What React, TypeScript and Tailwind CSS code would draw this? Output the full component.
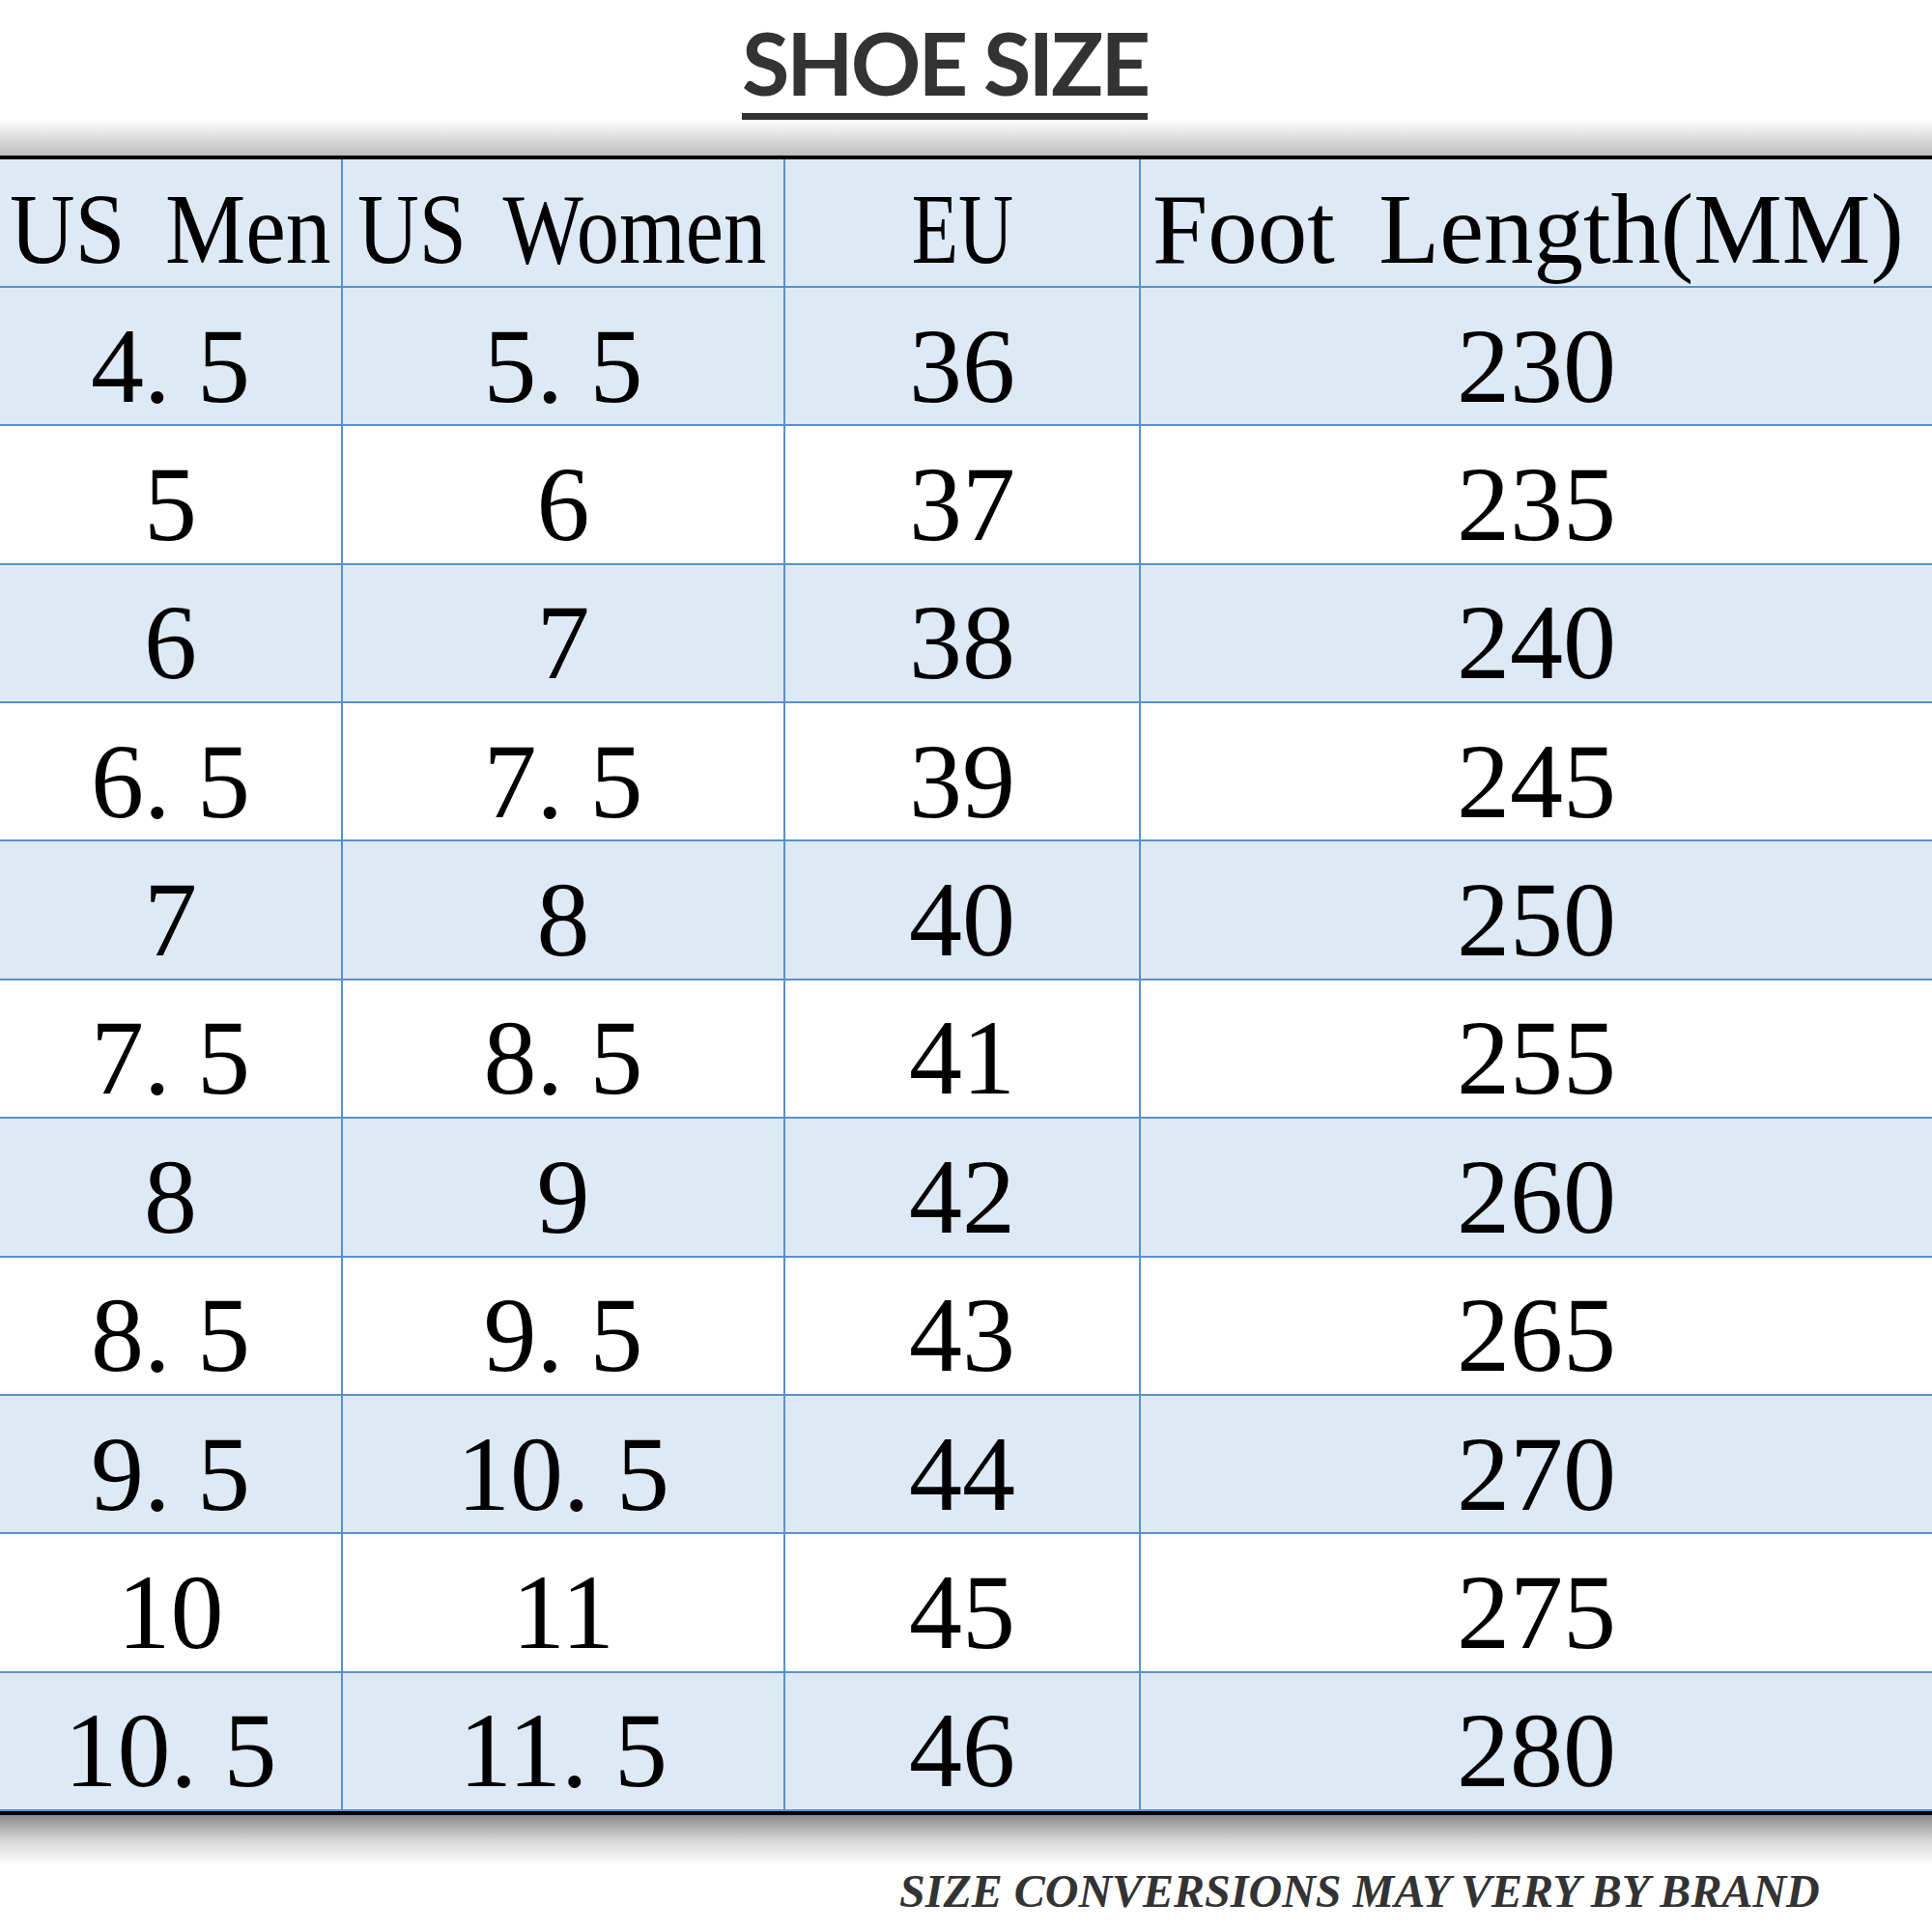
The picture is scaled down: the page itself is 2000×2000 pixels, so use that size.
import React from "react";

const rows: string[][] = [
  ["4. 5", "5. 5", "36", "230"],
  ["5", "6", "37", "235"],
  ["6", "7", "38", "240"],
  ["6. 5", "7. 5", "39", "245"],
  ["7", "8", "40", "250"],
  ["7. 5", "8. 5", "41", "255"],
  ["8", "9", "42", "260"],
  ["8. 5", "9. 5", "43", "265"],
  ["9. 5", "10. 5", "44", "270"],
  ["10", "11", "45", "275"],
  ["10. 5", "11. 5", "46", "280"],
];

export default function App() {
  return (
    <div className="w-[2000px] h-[2000px] bg-white overflow-hidden flex flex-col">
      <div className="h-[124px] flex items-start pl-[768px]">
        <span className="mt-[19px] inline-block font-['Lato',sans-serif] font-bold text-[90px] leading-none tracking-[-3px] text-[#333] border-b-[7px] border-[#333] pb-[8px]">
          SHOE SIZE
        </span>
      </div>
      <div className="h-[37px] bg-linear-to-b from-white to-[#bdbdbd]" />
      <div className="h-[1718px] border-t-4 border-b-4 border-black grid grid-cols-[355px_458px_368px_1fr] grid-rows-[133px_repeat(11,minmax(0,1fr))] font-['Liberation_Serif',serif] text-black">
        <div className="bg-[#ddeaf6] border-r-2 border-b-2 border-[#5a90cd] flex items-center pl-[10px] pt-[12px] overflow-hidden text-[104px] leading-none">
          <span className="inline-block origin-left scale-x-[0.9] whitespace-nowrap [word-spacing:20px]">US Men</span>
        </div>
        <div className="bg-[#ddeaf6] border-r-2 border-b-2 border-[#5a90cd] flex items-center pl-[15px] pt-[12px] overflow-hidden text-[104px] leading-none">
          <span className="inline-block origin-left scale-x-[0.85] whitespace-nowrap [word-spacing:20px]">US Women</span>
        </div>
        <div className="bg-[#ddeaf6] border-r-2 border-b-2 border-[#5a90cd] flex items-center justify-center pt-[12px] overflow-hidden text-[104px] leading-none">
          <span className="inline-block origin-center scale-x-[0.76] whitespace-nowrap">EU</span>
        </div>
        <div className="bg-[#ddeaf6] border-b-2 border-[#5a90cd] flex items-center pl-[12px] pt-[12px] overflow-hidden text-[104px] leading-none">
          <span className="inline-block origin-left scale-x-[0.99] whitespace-nowrap [word-spacing:20px]">Foot Length(MM)</span>
        </div>
        {rows.map((r, i) =>
          r.map((v, j) => (
            <div
              key={`${i}-${j}`}
              className={`${i % 2 === 0 ? "bg-[#ddeaf6]" : "bg-white"} ${j < 3 ? "border-r-2" : ""} border-b-2 border-[#5a90cd] flex items-center justify-center pt-[20px] text-[110px] leading-none whitespace-pre`}
            >
              {v}
            </div>
          ))
        )}
      </div>
      <div className="h-[52px] bg-linear-to-b from-[#8c8c8c] via-[#d6d6d6] to-white" />
      <div className="pt-[3px] pl-[931px]">
        <span className="font-['Liberation_Serif',serif] font-bold italic text-[48px] leading-none text-[#333] whitespace-nowrap">
          SIZE CONVERSIONS MAY VERY BY BRAND
        </span>
      </div>
    </div>
  );
}
